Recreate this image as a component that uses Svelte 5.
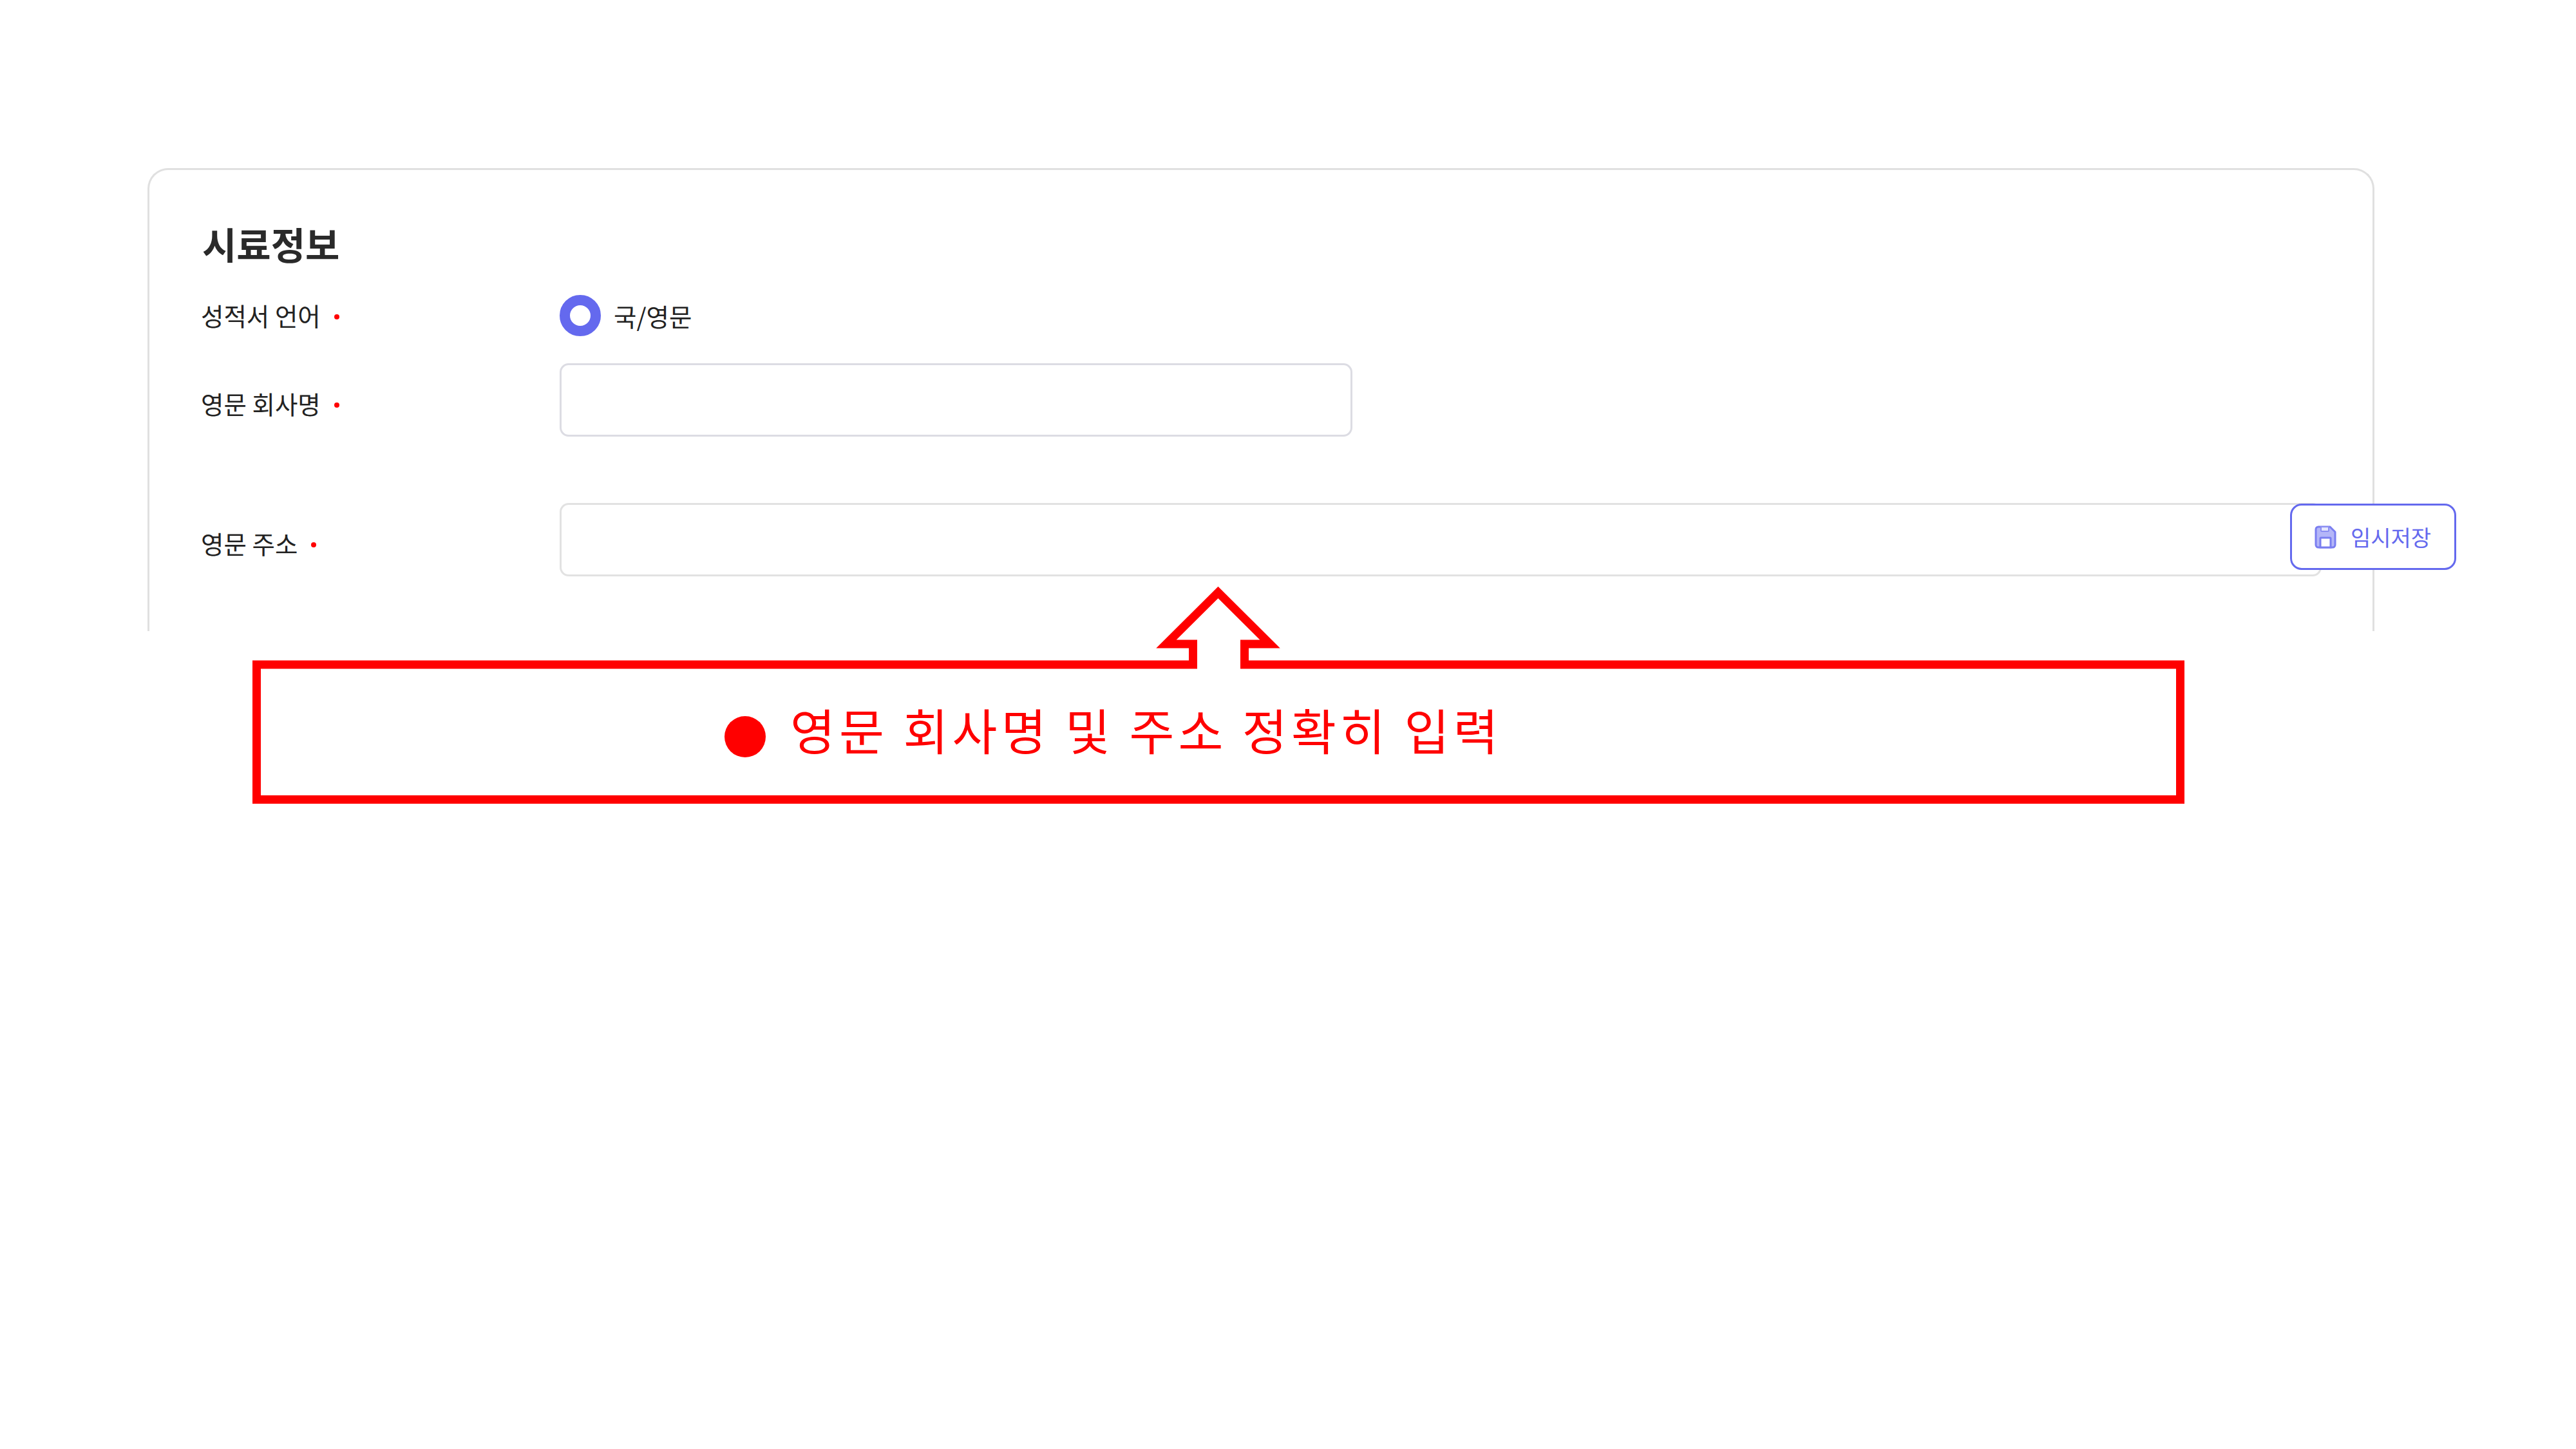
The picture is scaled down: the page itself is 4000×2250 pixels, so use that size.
<script>
  const rows = [
    { label: "영문 회사명", wide: false },
    { label: "영문 주소", wide: true }
  ];
</script>

<main class="page">
  <section class="card">
    <h2>시료정보</h2>
    <div class="row lang">
      <span class="label">성적서 언어<i class="req"></i></span>
      <label class="radio"><span class="dot"></span>국/영문</label>
    </div>
    {#each rows as row}
      <div class="row" class:wide={row.wide}>
        <span class="label">{row.label}<i class="req"></i></span>
        <div class="input"></div>
      </div>
    {/each}
  </section>

  <button class="save">
    <svg viewBox="0 0 34 36" width="34" height="36">
      <path d="M6 2H24L32 10V30a4 4 0 0 1-4 4H6a4 4 0 0 1-4-4V6a4 4 0 0 1 4-4z" fill="#b4b6f8" stroke="#7a7ef0" stroke-width="3" stroke-linejoin="round" />
      <path d="M10 2h12v6a1 1 0 0 1-1 1H11a1 1 0 0 1-1-1z" fill="#e4e5fd" stroke="#8a8df2" stroke-width="2" />
      <path d="M9 34V20a1 1 0 0 1 1-1h14a1 1 0 0 1 1 1v14z" fill="#fff" stroke="#7a7ef0" stroke-width="3" />
    </svg>
    임시저장
  </button>

  <div class="note">
    <svg class="callout" viewBox="392 905 3016 345" width="3016" height="345" fill="none">
      <path d="M398.5 1032H1852.5V1000H1811L1891.5 920L1972 1000H1932.5V1032H3385.5V1241.5H398.5Z" stroke="#ff0000" stroke-width="13" />
    </svg>
    <p class="note-text"><span class="bullet"></span>영문 회사명 및 주소 정확히 입력</p>
  </div>
</main>

<style>
  :global(body) {
    background: #fff;
  }

  .page {
    position: relative;
    width: 4000px;
    height: 2250px;
    padding-top: 261px;
    box-sizing: border-box;
    font-family: "Noto Sans CJK KR", "Noto Sans", sans-serif;
    color: #222;
    overflow: hidden;
  }

  .card {
    box-sizing: border-box;
    width: 3458px;
    height: 719px;
    margin-left: 229px;
    padding: 78px 0 0 82px;
    border: 3px solid #e0e0e0;
    border-bottom: 0;
    border-radius: 32px 32px 0 0;
  }

  h2 {
    margin: 0 0 44px;
    font-size: 58px;
    line-height: 72px;
    font-weight: 700;
    color: #2a2a2a;
  }

  .row {
    display: grid;
    grid-template-columns: 555px 1fr;
    align-items: center;
    margin-bottom: 103px;
    font-size: 38.5px;
  }

  .lang {
    height: 64px;
    margin-bottom: 42px;
  }

  .label {
    display: flex;
    align-items: center;
    gap: 21px;
    margin-left: -2px;
    padding-top: 10px;
  }

  .lang .label {
    padding: 0 0 2px;
  }

  .req {
    width: 8px;
    height: 8px;
    margin-top: 6px;
    border-radius: 50%;
    background: #f00;
  }

  .radio {
    display: flex;
    align-items: center;
    gap: 20px;
  }

  .dot {
    box-sizing: border-box;
    width: 64px;
    height: 64px;
    border: 16.5px solid #6469ee;
    border-radius: 50%;
  }

  .input {
    box-sizing: border-box;
    width: 1231px;
    height: 114px;
    border: 3px solid #dcdce3;
    border-radius: 14px;
  }

  .wide {
    margin-bottom: 0;
  }

  .wide .input {
    width: 2736px;
    border-color: #e2e2e2;
  }

  .save {
    position: absolute;
    left: 3556px;
    top: 782px;
    display: flex;
    align-items: center;
    gap: 22px;
    box-sizing: border-box;
    width: 258px;
    height: 103px;
    padding: 0 0 0 35px;
    border: 3px solid #6469ee;
    border-radius: 18px;
    background: #fff;
    color: #6469ee;
    font: 34px "Noto Sans CJK KR", sans-serif;
  }

  .note {
    position: relative;
    width: 3016px;
    height: 345px;
    margin: -75px 0 0 392px;
  }

  .callout {
    display: block;
  }

  .note-text {
    position: absolute;
    left: 733px;
    top: 177px;
    display: flex;
    align-items: center;
    gap: 38px;
    margin: 0;
    font-size: 76px;
    line-height: 100px;
    letter-spacing: 6.2px;
    color: #f00;
    white-space: pre;
  }

  .bullet {
    width: 64px;
    height: 64px;
    margin-top: 24px;
    border-radius: 50%;
    background: #f00;
  }
</style>
